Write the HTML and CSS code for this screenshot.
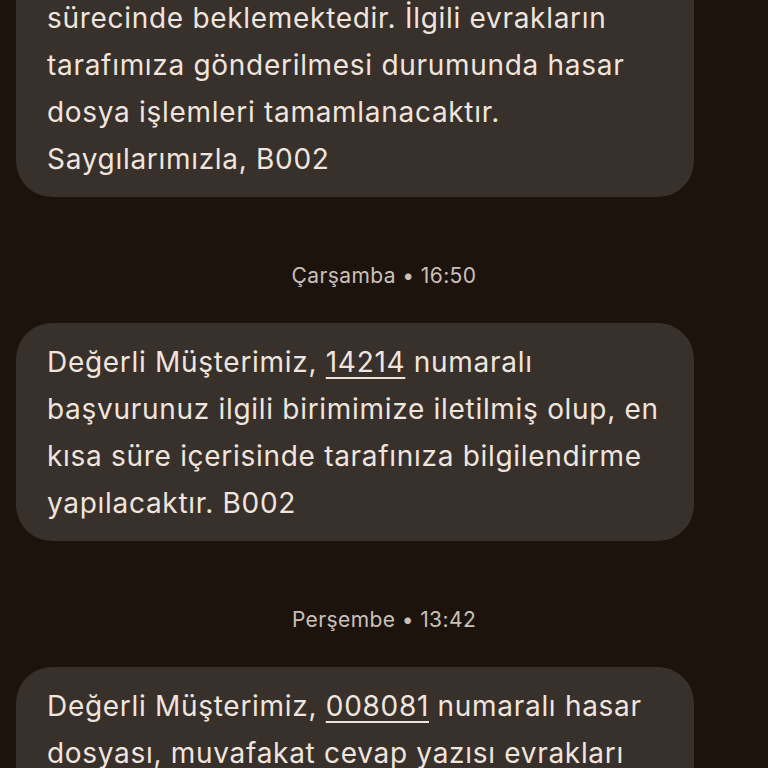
FILE: index.html
```html
<!DOCTYPE html>
<html lang="tr">
<head>
<meta charset="utf-8">
<link rel="stylesheet" href="styles.css">
</head>
<body>
<main class="thread">
  <div class="bubble first">
    <p>Değerli Müşterimiz, 008081 numaralı hasar dosyanız evrak<br>sürecinde beklemektedir. İlgili evrakların<br>tarafımıza gönderilmesi durumunda hasar<br>dosya işlemleri tamamlanacaktır.<br>Saygılarımızla, B002</p>
  </div>
  <div class="stamp">Çarşamba • 16:50</div>
  <div class="bubble">
    <p>Değerli Müşterimiz, <span class="num">14214</span> numaralı<br>başvurunuz ilgili birimimize iletilmiş olup, en<br>kısa süre içerisinde tarafınıza bilgilendirme<br>yapılacaktır. B002</p>
  </div>
  <div class="stamp">Perşembe • 13:42</div>
  <div class="bubble">
    <p>Değerli Müşterimiz, <span class="num">008081</span> numaralı hasar<br>dosyası, muvafakat cevap yazısı evrakları<br>beklenmektedir. B002</p>
  </div>
</main>
</body>
</html>
```
FILE: styles.css
```css
html, body {
  margin: 0;
  padding: 0;
  background: #1c130d;
  overflow: hidden;
}
body {
  width: 768px;
  height: 768px;
  font-family: Inter, Roboto, sans-serif;
  color: #efe5de;
}
.thread {
  display: flex;
  flex-direction: column;
  padding: 0 74px 0 16px;
  margin-top: -68px;
}
.bubble {
  background: #38302b;
  border-radius: 36px;
  padding: 16px 31px 14px 31px;
}
.bubble p {
  margin: 0;
  font-size: 28px;
  line-height: 47px;
  letter-spacing: 0.7px;
  white-space: nowrap;
}
.num {
  text-decoration: underline;
  text-decoration-thickness: 2px;
  text-underline-offset: 5px;
}
.stamp {
  text-align: center;
  font-size: 21px;
  line-height: 24px;
  letter-spacing: 0.4px;
  color: #cbc0b8;
  margin: 67px 0 35px 58px;
}
```
